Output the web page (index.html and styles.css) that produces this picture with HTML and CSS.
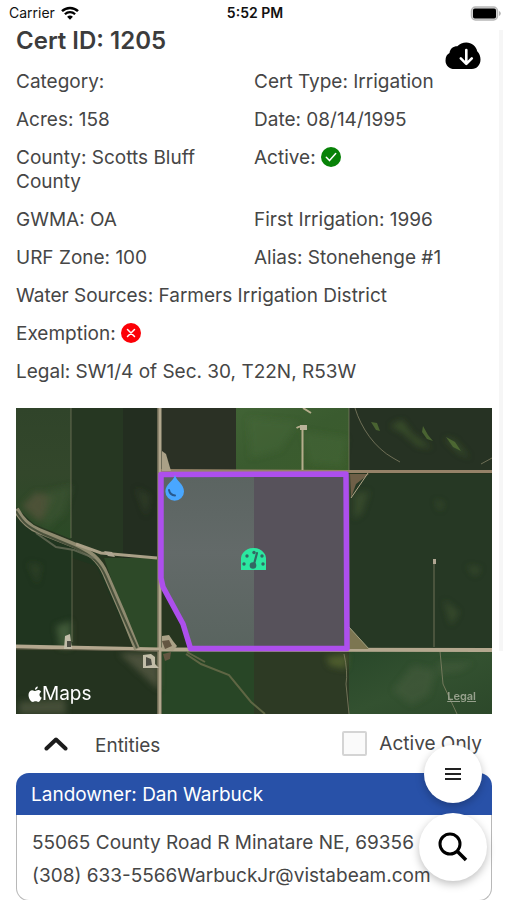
FILE: index.html
```html
<!DOCTYPE html>
<html lang="en">
<head>
<meta charset="utf-8">
<meta name="viewport" content="width=device-width, initial-scale=1">
<title>Cert ID: 1205</title>
<link rel="stylesheet" href="styles.css">
</head>
<body>
<div class="app">
  <header class="status">
    <div class="status-left">
      <span>Carrier</span>
      <svg width="18" height="14" viewBox="0 0 18 14" aria-hidden="true">
        <path d="M1 5.200a11.600 11.600 0 0 1 16 0" fill="none" stroke="#000" stroke-width="2.500"/>
        <path d="M3.900 8.300a7.300 7.300 0 0 1 10.200 0" fill="none" stroke="#000" stroke-width="2.300"/>
        <path d="M9 13.800 6.100 10.800a4.200 4.200 0 0 1 5.800 0z"/>
      </svg>
    </div>
    <time class="status-time">5:52 PM</time>
    <div class="status-right">
      <svg width="31" height="15" viewBox="0 0 31 15" aria-hidden="true">
        <rect x="1.500" y="1" width="26" height="13" rx="4" fill="#ddd" stroke="#b8b8b8" stroke-width="1.500"/>
        <rect x="3" y="2.500" width="23" height="10" rx="1.800"/>
        <path d="M29 5v5q1.800-.8 1.800-2.500T29 5z" fill="#b4b4b4"/>
      </svg>
    </div>
  </header>

  <main class="content">
    <div class="title-row">
      <h1>Cert ID: 1205</h1>
      <button class="download" type="button" aria-label="Download">
        <svg width="36" height="28" viewBox="0 0 36 28" aria-hidden="true">
          <path d="M9.500 27C4.500 27 .5 23.500.5 18.700c0-3.800 1.500-6.500 4-7.700C5 7 8 4.300 12.300 4.300 14.500 2 17.800.5 21.300.5c5.500 0 9.800 3.500 10.900 8.700 2.200 2 3.300 5 3.300 8.300 0 5.300-3.600 9.500-8.700 9.500z"/>
          <path d="M21.300 8v13M15.800 16.300l5.500 5.500 5.500-5.500" fill="none" stroke="#fff" stroke-width="2.600" stroke-linecap="round" stroke-linejoin="round"/>
        </svg>
      </button>
    </div>

    <section class="details">
      <p>Category:</p>
      <p>Cert Type: Irrigation</p>
      <p>Acres: 158</p>
      <p>Date: 08/14/1995</p>
      <p>County: Scotts Bluff County</p>
      <p>Active:
        <svg class="mark" viewBox="0 0 20 20" role="img" aria-label="Yes"><circle cx="10" cy="10" r="10" fill="#078207"/><path d="M5.300 10.300l3.200 3.300 6.200-7" fill="none" stroke="#fff" stroke-width="1.500" stroke-linecap="round" stroke-linejoin="round"/></svg>
      </p>
      <p>GWMA: OA</p>
      <p>First Irrigation: 1996</p>
      <p>URF Zone: 100</p>
      <p>Alias: Stonehenge #1</p>
      <p class="wide">Water Sources: Farmers Irrigation District</p>
      <p class="wide">Exemption:
        <svg class="mark" viewBox="0 0 20 20" role="img" aria-label="No"><circle cx="10" cy="10" r="10" fill="#fc0006"/><path d="M6.500 6.500l7 7M13.500 6.500l-7 7" fill="none" stroke="#fff" stroke-width="1.500" stroke-linecap="round"/></svg>
      </p>
      <p class="wide">Legal: SW1/4 of Sec. 30, T22N, R53W</p>
    </section>

    <div class="map">
      <svg class="map-image" viewBox="0 0 476 306" role="img" aria-label="Satellite map of the certified field">
        <defs>
          <linearGradient id="west" x1="0" y1="0" x2="0" y2="1"><stop offset="0" stop-color="#30442a"/><stop offset=".5" stop-color="#33472b"/><stop offset="1" stop-color="#2b4a26"/></linearGradient>
          <linearGradient id="meadow" x1="0" y1="0" x2="1" y2="1"><stop offset="0" stop-color="#416335"/><stop offset=".5" stop-color="#3a5b2f"/><stop offset="1" stop-color="#3b5c2c"/></linearGradient>
          <linearGradient id="southeast" x1="0" y1="0" x2="1" y2="1"><stop offset="0" stop-color="#29482a"/><stop offset=".5" stop-color="#335130"/><stop offset="1" stop-color="#2c482a"/></linearGradient>
          <linearGradient id="field" x1="0" y1="0" x2="0" y2="1"><stop offset="0" stop-color="#5b6461"/><stop offset=".45" stop-color="#636a69"/><stop offset="1" stop-color="#59645f"/></linearGradient>
          <filter id="soft" x="-50%" y="-50%" width="200%" height="200%"><feGaussianBlur stdDeviation="3"/></filter>
        </defs>
        <rect width="476" height="306" fill="#26351f"/>
        <path d="M0 0h55v131L18 116 0 99z" fill="url(#west)"/>
        <rect x="55" width="52" height="148" fill="#263722"/>
        <rect x="107" width="36" height="150" fill="#232e20"/>
        <rect x="145" width="76" height="63" fill="#2b3125"/>
        <rect x="220" width="113" height="63" fill="url(#meadow)"/>
        <rect x="333" width="143" height="63" fill="#263223"/>
        <rect x="333" y="66" width="143" height="175" fill="#263824"/>
        <path d="M0 101l22 19 38 17 28 21 11 30 18 53H0z" fill="#20351f"/>
        <path d="M56 150l24 8 38 83H56z" fill="#26331f"/>
        <path d="M88 150h56v90h-25z" fill="#2d4928"/>
        <rect y="243" width="143" height="63" fill="#24331f"/>
        <rect x="146" y="243" width="92" height="63" fill="#284626"/>
        <rect x="238" y="243" width="95" height="63" fill="#2d3a24"/>
        <rect x="333" y="243" width="143" height="63" fill="url(#southeast)"/>
        <g filter="url(#soft)">
          <path d="M6 98l14-14 18 5-14 26z" fill="#5f5940" opacity=".6"/>
          <path d="M30 84l26-6-8 27-20 18z" fill="#3e5734" opacity=".6"/>
          <path d="M232 10l50 4-18 28-29 8zM286 23l45 7-5 28-32-3z" fill="#4a6b38" opacity=".35"/>
          <path d="M338 86l15-3-7 22-8 6zM419 92l9 3-4 8zM428 192l15 12-8 13zM451 158l14 2-6 8z" fill="#4b6038" opacity=".45"/>
          <path d="M377 282l20-25 22 5-6 25-18 10zM422 255h35l-14 8-21 2z" fill="#526344" opacity=".3"/>
          <path d="M310 249l22-3-2 15-16-3z" fill="#627333" opacity=".6"/>
          <path d="M120 80l14 8-4 20zM12 155l13 2-4 19z" fill="#415032" opacity=".4"/>
          <path d="M103 245h40v37z" fill="#65664e" opacity=".6"/>
          <path d="M3 294l46-3 1 15H3z" fill="#5c6147" opacity=".6"/>
          <path d="M40 218l15-5v27H44z" fill="#577048" opacity=".6"/>
          <path d="M374 18l12-6 10 14 20 14-14-2-16-14zM428 30l10 2 16 18-12-6z" fill="#4c6a30" opacity=".5"/>
        </g>
        <path d="M355 14l6 1 3 8-4-1zM407 18l5 9 5 6-6-2-5-7zM430 29l9 5 6 9-8-4z" fill="#587838" opacity=".7"/>
        <g fill="none" stroke="#8e8a6e" stroke-width="1">
          <path d="M55 0v130M56 142v92M333 0v63M333 66v177" opacity=".6"/>
          <path d="M339 0c6 20 20 40 38 50l7 4M465 56l11-6M418 158v81M418 158v-4M424 243l3 33 14 30M328 246q4 18 2 30l3 30" opacity=".7"/>
          <path d="M170 246l15 10 28 11 22 27 14 12M171 244l18 10" stroke="#5f6644" stroke-width="2"/>
          <path d="M147 180l18 8 10 20 12 33" opacity=".7"/>
        </g>
        <path d="M143.500 0v306" stroke="#b1a78d" stroke-width="4"/>
        <path d="M142 0v306" stroke="#6c6651" stroke-width="1"/>
        <path d="M0 238.500l143 3 333 .5" stroke="#b4a88f" stroke-width="4" fill="none"/>
        <path d="M0 241l143 2" stroke="#5c5945"/>
        <path d="M145 62.500l188 1h143" stroke="#958268" stroke-width="3" fill="none"/>
        <path d="M0 101c5 10 11 17 23 22l30 12c21 8 31 17 37 32l16 37 15 37" fill="none" stroke="#8f8b70" stroke-width="6"/>
        <path d="M0 103c9 15 15 17 27 23l31 13c19 9 26 16 32 30l16 37 15 34" fill="none" stroke="#49513b" stroke-width="2"/>
        <path d="M60 136l25 9 56 5" fill="none" stroke="#aaa087" stroke-width="3"/>
        <path d="M20 125l20 14 18 3 20 8" fill="none" stroke="#72755f" stroke-width="2" opacity=".7"/>
        <path d="M286.500 62V20q-1-3-6 0M287 0l8 5" fill="none" stroke="#b5ad8c" stroke-width="2"/>
        <path d="M284 17h7v5h-7z" fill="#b9b399"/>
        <path d="M334 66h19l-13 10-5 14z" fill="#6e5f47"/><path d="M335 90l17-25" stroke="#b0a587"/>
        <path d="M333 219l20 22h-20z" fill="#7c7651"/><path d="M333 219l20 22" stroke="#a5a382"/>
        <path d="M146 43l4 3 5 17h-9z" fill="#aaa187"/>
        <path d="M49 228l5-2 2 15H48zM127 247l8-1 4 3v7l4 4h-16z" fill="#c2bda8"/>
        <path d="M51 233h4v6h-4zM130 249l5 2 1 6-6 1z" fill="#4c4d43"/>
        <path d="M146 228l7-1 4 6 4 5-4 5-11-2z" fill="#aaa186"/>
        <path d="M146 233l7-1 3 6-7 3zM147 246l8-2-1 7-5 2z" fill="#635642"/>
        <path d="M417 151h3v5h-3zM88 143l8 1 3 5-7-1z" fill="#b0a692"/>

        <path d="M145 66h93v175h-62l-10-28-19-34-2-4z" fill="url(#field)"/>
        <path d="M238 66h92v174h-92z" fill="#57525b"/>
        <path d="M145 66.500l185-.5 1 174.500H174.500L167 216l-20-37-2-9z" fill="none" stroke="#ad4fed" stroke-width="5.500" stroke-linejoin="round"/>
        <path d="M159 67c2 7 9 9 9 16.500a9.300 9.300 0 0 1-18.600 0C149.400 76 157 74 159 67z" fill="#49a7ff"/>
        <path d="M153 82q1 5 6 5.500" fill="none" stroke="#28598e" stroke-width="2" stroke-linecap="round"/>
        <path d="M225 162v-12q0-3 2-5 4-5 10-5h1q6 0 10 5 2 2 2 5v12z" fill="#2ce7a0"/>
        <g fill="#336863"><circle cx="228" cy="156" r="1.700"/><circle cx="231" cy="148" r="1.700"/><circle cx="238" cy="144.500" r="1.700"/><circle cx="246" cy="148" r="1.700"/><circle cx="247" cy="156" r="1.700"/><circle cx="237" cy="157.500" r="3.300"/></g>
        <path d="M237.500 158l3.500-13" stroke="#336863" stroke-width="2.200" stroke-linecap="round"/>
      </svg>
      <div class="map-brand">
        <svg width="14" height="17" viewBox="0 0 14 17" aria-hidden="true"><path d="M9.800.5c.1 1.800-1.200 3.300-2.800 3.300C6.800 2.100 8.200.7 9.800.5zM7.200 5c.8 0 1.600-.9 3.100-.9 1 0 2.200.5 2.900 1.600-2.500 1.500-2.100 4.900.5 5.900-.6 1.800-1.900 4.300-3.400 4.300-1.100 0-1.400-.7-2.700-.7s-1.700.7-2.700.7C3 15.900.5 12.300.5 8.900.5 5.800 2.400 4.200 4.300 4.200 5.600 4.200 6.500 5 7.200 5z" fill="#fff"/></svg>
        <span>Maps</span>
      </div>
      <a class="map-legal" href="#legal">Legal</a>
    </div>

    <section class="entities">
      <div class="entities-bar">
        <button class="toggle" type="button" aria-expanded="true" aria-label="Collapse entities">
          <svg width="24" height="16" viewBox="0 0 24 16" aria-hidden="true"><path d="M2.500 12.500L12 3.500l9.500 9" fill="none" stroke="#1c1c1c" stroke-width="4" stroke-linecap="round" stroke-linejoin="round"/></svg>
        </button>
        <h2>Entities</h2>
        <label class="active-only"><input type="checkbox"><span>Active Only</span></label>
      </div>
      <article class="card">
        <h3>Landowner: Dan Warbuck</h3>
        <div class="card-body">
          <p>55065 County Road R Minatare NE, 69356</p>
          <p><span>(308) 633-5566</span><span>WarbuckJr@vistabeam.com</span></p>
        </div>
      </article>
    </section>
  </main>

  <div class="scroll-edge"></div>

  <nav class="actions" aria-label="Actions">
    <button class="fab fab-menu" type="button" aria-label="Menu">
      <svg width="18" height="14" viewBox="0 0 18 14" aria-hidden="true"><path d="M1 2h16M1 7h16M1 12h16" stroke="#222" stroke-width="1.800"/></svg>
    </button>
    <button class="fab fab-search" type="button" aria-label="Search">
      <svg width="30" height="30" viewBox="0 0 30 30" aria-hidden="true"><circle cx="12" cy="12" r="10" fill="none" stroke="#000" stroke-width="3"/><path d="M19 19l9 9" stroke="#000" stroke-width="3.500"/></svg>
    </button>
  </nav>
</div>
</body>
</html>
```
FILE: styles.css
```css
* {
  box-sizing: border-box;
}

body {
  margin: 0;
  background: #fff;
  color: #464646;
  font-family: Inter, "Liberation Sans", sans-serif;
  font-size: 19px;
  line-height: 24px;
}

h1, h2, h3, p {
  margin: 0;
  font-size: inherit;
  font-weight: 400;
}

button {
  padding: 0;
  border: 0;
  background: none;
}

svg {
  display: block;
}

.app {
  position: relative;
  display: flex;
  flex-direction: column;
  height: 100vh;
  overflow: hidden;
}

.status {
  display: grid;
  grid-template-columns: 1fr auto 1fr;
  align-items: center;
  height: 26px;
  flex: none;
  padding: 0 6px 0 9px;
  color: #111;
  font-size: 14px;
}

.status-left {
  display: flex;
  align-items: center;
  gap: 6px;
}

.status-time {
  font-weight: 600;
}

.status-right {
  display: flex;
  justify-content: flex-end;
}

.content {
  flex: 1;
  min-height: 0;
  overflow-y: auto;
  scrollbar-width: none;
  padding: 0 15px 0 16px;
}

.title-row {
  display: flex;
  align-items: flex-start;
  justify-content: space-between;
  height: 44px;
  padding-right: 11px;
}

h1 {
  color: #3c3c3c;
  font-size: 24px;
  font-weight: 600;
  line-height: 30px;
}

.download {
  align-self: flex-end;
}

.details {
  display: grid;
  grid-template-columns: 1fr 1fr;
  row-gap: 14px;
}

.details p {
  padding-right: 8px;
}

.details .wide {
  grid-column: 1 / -1;
}

.mark {
  display: inline-block;
  width: 20px;
  height: 20px;
  vertical-align: -3px;
}

.map {
  position: relative;
  margin-top: 24px;
}

.map-image {
  width: 100%;
  height: auto;
}

.map-brand {
  position: absolute;
  left: 12px;
  bottom: 8px;
  display: flex;
  align-items: center;
  color: #fff;
}

.map-legal {
  position: absolute;
  right: 16px;
  bottom: 8px;
  color: #96a08c;
  font-size: 11px;
  font-weight: 600;
  line-height: 20px;
}

.entities-bar {
  display: flex;
  align-items: center;
  height: 59px;
  padding: 0 10px 0 28px;
}

.entities-bar h2 {
  margin: 4px 0 0 27px;
}

.active-only {
  display: flex;
  align-items: center;
  gap: 12px;
  margin-left: auto;
}

.active-only input {
  appearance: none;
  width: 25px;
  height: 25px;
  margin: 0;
  border: 2px solid #d4d4d4;
  border-radius: 2px;
  background: #fafafa;
}

.card h3 {
  padding: 10px 15px 8px;
  border-radius: 13px 13px 0 0;
  background: #2851a8;
  color: #fff;
}

.card-body {
  display: grid;
  gap: 9px;
  padding: 16px 15px 12px;
  border: 1px solid #b8b8b8;
  border-top: 0;
  border-radius: 0 0 13px 13px;
}

.scroll-edge {
  position: absolute;
  top: 30px;
  right: 4px;
  width: 4px;
  height: 69%;
  background: #f6f6f6;
}

.actions {
  position: absolute;
  right: 20px;
  bottom: 19px;
  display: flex;
  flex-direction: column;
  align-items: center;
  gap: 10px;
}

.fab {
  display: grid;
  place-items: center;
  border-radius: 50%;
  background: #fff;
  box-shadow: 0 3px 8px rgba(0, 0, 0, 0.25);
}

.fab-menu {
  width: 58px;
  height: 58px;
}

.fab-search {
  width: 68px;
  height: 68px;
}
```
